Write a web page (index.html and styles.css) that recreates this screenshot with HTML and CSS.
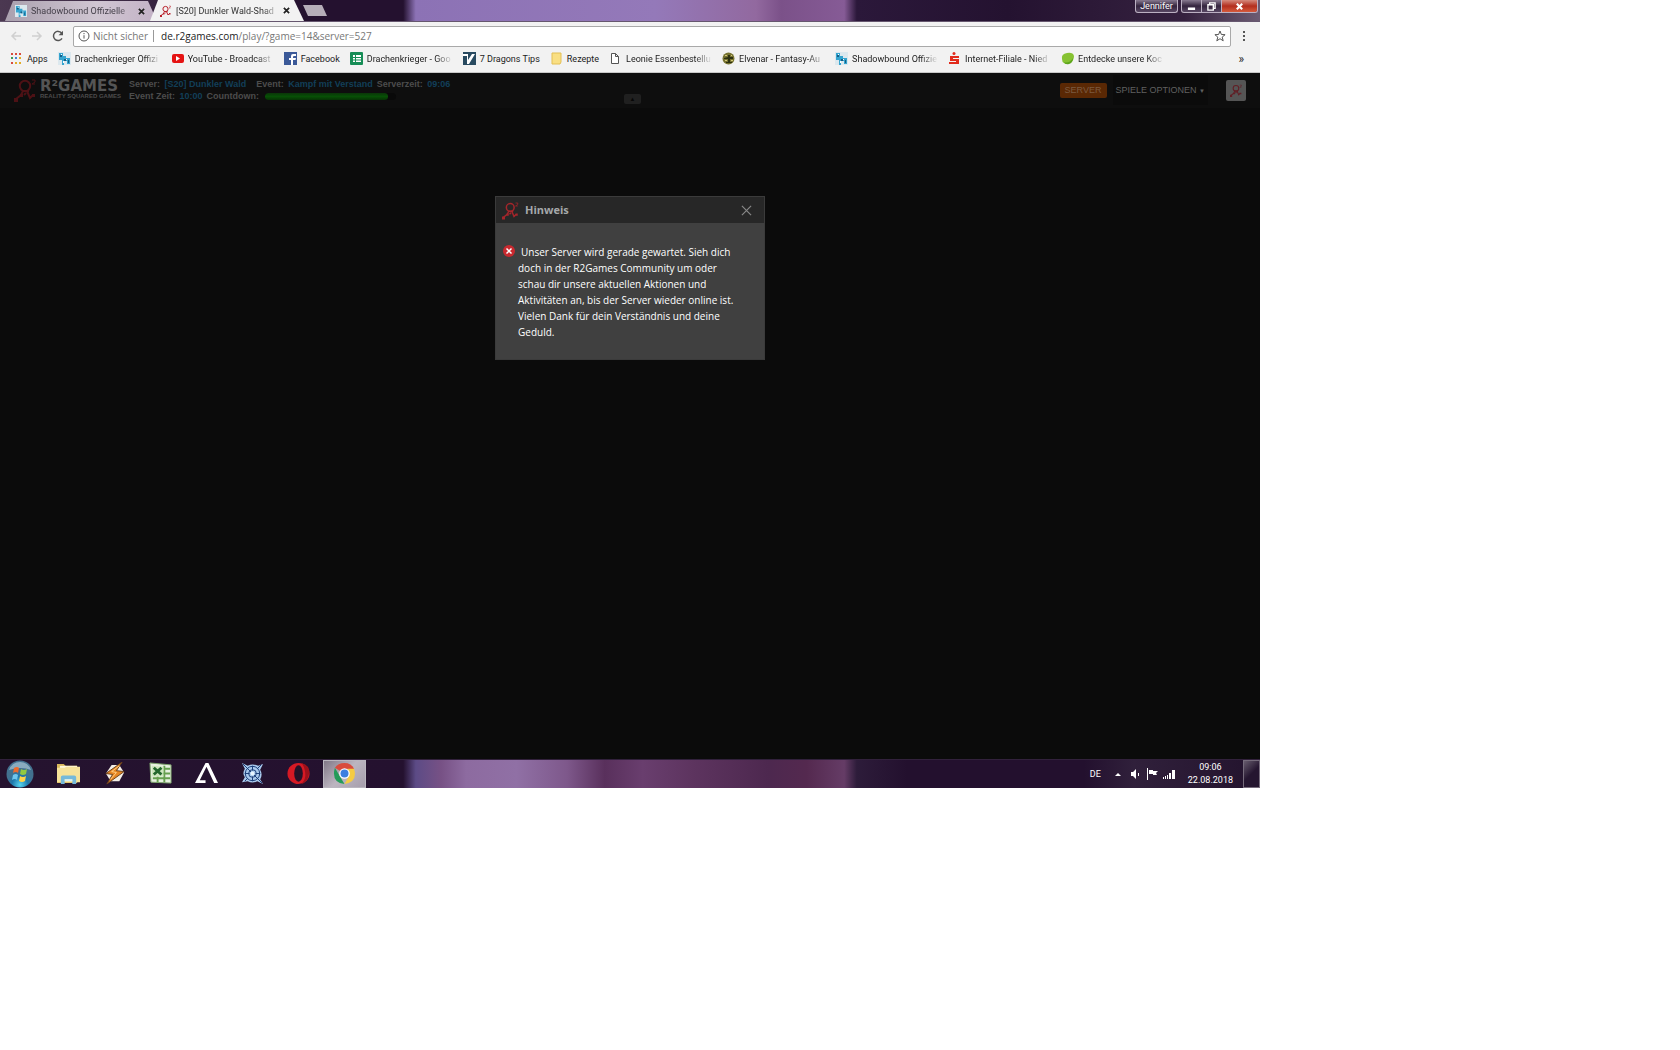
FILE: index.html
```html
<!DOCTYPE html>
<html lang="de">
<head>
  <meta charset="UTF-8" />
  <meta name="viewport" content="width=device-width, initial-scale=1" />
  <title>[S20] Dunkler Wald-Shadowbound</title>
  <link rel="stylesheet" href="styles.css">
</head>
<body>
  <!-- shared icons -->
  <svg class="sprite" aria-hidden="true">
    <symbol id="r2" viewBox="0 0 24 24">
      <g fill="none" stroke="currentColor" stroke-width="2">
        <circle cx="11" cy="8" r="5.2" />
        <path d="M8 13h7M9 13l-2 4 -5 4M13 13l3 7 3-3M10 17l2-2" />
        <path d="M18 2h3v2l-3 2h3" stroke-width="1" />
      </g>
      <path d="M0 20h4v4H0zM18 16h3v3h-3zM6 16h3v3H6z" fill="currentColor" />
    </symbol>
    <symbol id="dragon" viewBox="0 0 13 13">
      <path d="M0 0h13v13H0z" fill="#dce8ee" />
      <path d="M1 1h4v3h3v2h4v6H9V9H6v4H4V8H1z" fill="#35a4cf" />
      <path d="M2 3h2v2H2zM6 7h2v2H6zM10 8h1v3h-1z" fill="#165f86" />
      <path d="M3 2h1v1H3zM8 7h1v1H8zM5 9h1v2H5z" fill="#fff" />
    </symbol>
  </svg>

  <div class="desktop">
    <header class="titlebar">
      <div class="tabs">
        <div class="tab">
          <svg class="fav"><use href="#dragon" /></svg>
          <span class="tab-title">Shadowbound Offizielle</span>
          <button class="tab-close" aria-label="Tab schließen"><svg viewBox="0 0 8 8"><path d="M1 1l6 6M7 1L1 7" /></svg></button>
        </div>
        <div class="tab active">
          <svg class="fav red"><use href="#r2" /></svg>
          <span class="tab-title">[S20] Dunkler Wald-Shad</span>
          <button class="tab-close" aria-label="Tab schließen"><svg viewBox="0 0 8 8"><path d="M1 1l6 6M7 1L1 7" /></svg></button>
        </div>
        <button class="new-tab" aria-label="Neuer Tab"></button>
      </div>
      <div class="window-controls">
        <button class="user">Jennifer</button>
        <div class="control-group">
          <button aria-label="Minimieren"><svg viewBox="0 0 10 10"><path d="M1 6h8v3H1z" fill="#fff" /></svg></button>
          <button aria-label="Verkleinern"><svg viewBox="0 0 10 10"><path d="M3 3V1h6v6H7M1 3h6v6H1z" fill="none" stroke="#fff" stroke-width="1.5" /></svg></button>
          <button class="close" aria-label="Schließen"><svg viewBox="0 0 10 10"><path d="M2 2l6 6M8 2L2 8" stroke="#fff" stroke-width="2.4" /></svg></button>
        </div>
      </div>
    </header>

    <div class="toolbar">
      <button class="nav off" aria-label="Zurück"><svg viewBox="0 0 12 12"><path d="M11 6H2M6 2L2 6l4 4" /></svg></button>
      <button class="nav off" aria-label="Vorwärts"><svg viewBox="0 0 12 12"><path d="M1 6h9M6 2l4 4-4 4" /></svg></button>
      <button class="nav" aria-label="Neu laden"><svg viewBox="0 0 12 12"><path d="M10 8.4A4.6 4.6 0 1 1 9.6 3" /><path d="M11 .8v4.4H6.600z" class="solid" /></svg></button>
      <div class="omnibox">
        <svg class="info" viewBox="0 0 12 12"><circle cx="6" cy="6" r="5" /><path d="M6 5.200v3.400M6 3v1.200" /></svg>
        <span class="insecure">Nicht sicher</span>
        <span class="url"><b>de.r2games.com</b>/play/?game=14&amp;server=527</span>
        <button class="star" aria-label="Lesezeichen"><svg viewBox="0 0 12 12"><path d="M6 1l1.400 3.500 3.700.2-2.900 2.400 1 3.700L6 8.700l-3.200 2.100 1-3.700L.9 4.700l3.700-.2z" /></svg></button>
      </div>
      <button class="dots" aria-label="Menü"><svg viewBox="0 0 4 12"><path d="M1 1h2v2H1zM1 5h2v2H1zM1 9h2v2H1z" /></svg></button>
    </div>

    <nav class="bookmarks">
      <a href="#"><svg viewBox="0 0 13 13"><path d="M1 1h2v2H1zM1 10h2v2H1z" fill="#d94b3d" /><path d="M5 1h2v2H5zM9 1h2v2H9z" fill="#d94b3d" /><path d="M1 5h2v2H1z" fill="#3f9c55" /><path d="M5 5h2v2H5z" fill="#4680d8" /><path d="M9 5h2v2H9zM5 10h2v2H5zM9 10h2v2H9z" fill="#e2ac26" /></svg><span>Apps</span></a>
      <a href="#"><svg><use href="#dragon" /></svg><span class="long">Drachenkrieger Offizi</span></a>
      <a href="#"><svg viewBox="0 0 13 13"><rect x="1" y="2" width="12" height="9" rx="2" fill="#e51313" /><path d="M5 4l4 2.500L5 9z" fill="#fff" /></svg><span class="long">YouTube - Broadcast</span></a>
      <a href="#"><svg viewBox="0 0 13 13"><path d="M0 0h13v13H0z" fill="#3b5998" /><path d="M7 13V8H5V6h2V4q0-2 2-2h3v2h-2q-1 0-1 1v1h3l-.5 2H9v5z" fill="#fff" /></svg><span>Facebook</span></a>
      <a href="#"><svg viewBox="0 0 13 13"><rect width="13" height="13" rx="1" fill="#168d56" /><path d="M3 3h8v7H3z" fill="#fff" /><path d="M3 5.500h8M3 8h8M5.500 3v7" stroke="#168d56" /></svg><span class="long">Drachenkrieger - Goo</span></a>
      <a href="#"><svg viewBox="0 0 13 13"><path d="M0 0h13v13H0z" fill="#284a60" /><path d="M0 2h5v6l4-6h3L6 12H4V4H0z" fill="#fff" /></svg><span>7 Dragons Tips</span></a>
      <a href="#"><svg viewBox="0 0 13 13"><path d="M2 1h9v9l-1 2H2z" fill="#f9df83" stroke="#e3bf55" /></svg><span>Rezepte</span></a>
      <a href="#"><svg viewBox="0 0 13 13"><path d="M2.500 1.500h4l3 3v7h-7zM6.500 1.500v3h3" fill="#fff" stroke="#555" /></svg><span class="long">Leonie Essenbestellu</span></a>
      <a href="#"><svg viewBox="0 0 13 13"><circle cx="6.500" cy="6.500" r="6" fill="#777331" /><path d="M6 3h2v2h3v2H8v3h2v1H4v-1h2V7H2V6l4-1z" fill="#2c3010" /><path d="M3 3h2v1H3zM9 3h1v1H9zM3 8h2v1H3zM9 8h2v1H9z" fill="#d5ca77" /></svg><span class="long">Elvenar - Fantasy-Au</span></a>
      <a href="#"><svg><use href="#dragon" /></svg><span class="long">Shadowbound Offizie</span></a>
      <a href="#"><svg viewBox="0 0 13 13"><circle cx="6" cy="1.500" r="1.500" fill="#e22b1c" /><path d="M2 4h9v2H5v1h6v5H1v-2h7V9H2z" fill="#e22b1c" /></svg><span class="long">Internet-Filiale - Nied</span></a>
      <a href="#"><svg viewBox="0 0 13 13"><path d="M1 7q-1-5 5-6t7 3q0 5-4 7t-6 0q-2-1-2-4z" fill="#86c232" /><path d="M3 10q5 2 9-4 0 5-4 6t-5-2z" fill="#5da51c" /></svg><span class="long">Entdecke unsere Koc</span></a>
      <button class="more" aria-label="Weitere Lesezeichen">»</button>
    </nav>

    <main class="page">
      <div class="game-bar">
        <a href="#" class="brand">
          <svg><use href="#r2" /></svg>
          <span class="brand-text">
            <span class="brand-name">R²GAMES</span>
            <span class="brand-sub">REALITY SQUARED GAMES</span>
          </span>
        </a>
        <div class="status">
          <div class="status-row">
            <span>Server: <b>[S20] Dunkler Wald</b></span>
            <span class="event">Event: <b>Kampf mit Verstand</b></span>
            <span>Serverzeit: <b>09:06</b></span>
          </div>
          <div class="status-row">
            <span>Event Zeit: <b>10:00</b></span>
            <span>Countdown:</span>
            <div class="countdown"><div class="countdown-fill"></div></div>
          </div>
        </div>
        <div class="options">
          <button class="server">SERVER</button>
          <button class="game-options">SPIELE OPTIONEN <small>▼</small></button>
          <button class="r2-button" aria-label="R2Games"><svg><use href="#r2" /></svg></button>
        </div>
        <button class="collapse" aria-label="Leiste einklappen">▲</button>
      </div>

      <section class="dialog" role="dialog" aria-labelledby="dialog-title">
        <div class="dialog-head">
          <svg class="dialog-logo"><use href="#r2" /></svg>
          <h1 id="dialog-title">Hinweis</h1>
          <button class="dialog-close" aria-label="Schließen"><svg viewBox="0 0 12 12"><path d="M1 1l10 10M11 1L1 11" /></svg></button>
        </div>
        <div class="dialog-body">
          <svg viewBox="0 0 12 12"><circle cx="6" cy="6" r="6" fill="#c9292f" /><path d="M3.500 3.500l5 5M8.500 3.500l-5 5" stroke="#fff" stroke-width="1.500" /></svg>
          <p>Unser Server wird gerade gewartet. Sieh dich<br>doch in der R2Games Community um oder<br>schau dir unsere aktuellen Aktionen und<br>Aktivitäten an, bis der Server wieder online ist.<br>Vielen Dank für dein Verständnis und deine<br>Geduld.</p>
        </div>
      </section>
    </main>

    <footer class="taskbar">
      <button class="start" aria-label="Start">
        <svg viewBox="0 0 28 28">
          <defs><radialGradient id="orb" cy=".9"><stop offset="0" stop-color="#56d5ef" /><stop offset=".6" stop-color="#1d78ac" /><stop offset="1" stop-color="#42718f" /></radialGradient></defs>
          <circle cx="14" cy="14" r="13.500" fill="url(#orb)" />
          <path d="M3 10q3-8 11-8t11 8q-10-4-22 0z" fill="#b9d4df" opacity=".6" />
          <path d="M8 8q3-2 5 0l-1 5q-2-2-5 0z" fill="#ee6b2d" />
          <path d="M15 9q3 2 6 0l-1 5q-3 2-6 0z" fill="#92c940" />
          <path d="M7 15q3-2 5 0l-1 5q-2-2-5 0z" fill="#6fc6ed" />
          <path d="M14 16q3 2 6 0l-1 5q-3 2-6 0z" fill="#ffd34a" />
        </svg>
      </button>
      <div class="tasks">
        <button aria-label="Explorer"><svg viewBox="0 0 24 24"><path d="M0 2h7l2 2h12v18H0z" fill="#d9b85b" /><path d="M3 4h18v4H3z" fill="#fff8db" /><path d="M0 6h8l2-1h14v16H0z" fill="#f6e299" /><path d="M4 23v-7q0-2 2-2h12q2 0 2 2v7h-4v-5H8v5z" fill="#75b9da" /><path d="M8 18h8v2H8z" fill="#d8f1f8" /></svg></button>
        <button aria-label="Winamp"><svg viewBox="0 0 24 24"><path d="M9 3h8l5 8-5 9H8l-5-8z" fill="#f4eee6" /><path d="M20 0L3 12l7 1-6 10 18-13-8-1z" fill="#e68522" stroke="#68401c" /><path d="M17 4l-8 6 5 1-6 7" fill="none" stroke="#ffd088" /></svg></button>
        <button aria-label="Excel"><svg viewBox="0 0 24 24"><path d="M1 1l22 2v19l-21-1z" fill="#e6f1df" stroke="#7da56d" /><path d="M15 7h7M14 12h8M4 17h18M16 4v17M9 15v6" stroke="#66a04f" stroke-width="2" /><path d="M3 4l12 1v10H3z" fill="#cde6bd" /><path d="M5 6l8 7M13 6l-8 7" stroke="#23672d" stroke-width="3" /></svg></button>
        <button aria-label="Aion"><svg viewBox="0 0 24 24"><path d="M0 22L11 1h3l10 21h-4L12 5 5 19h6v3z" fill="#fff" /></svg></button>
        <button aria-label="Spiel"><svg viewBox="0 0 24 24"><path d="M1 1l6 3q5-3 11 0l5-2-3 6q3 5 0 10l3 5-6-3q-5 3-10 0l-6 1 3-5q-3-4 0-9z" fill="#a9c9ec" /><g fill="none" stroke="#193c77"><circle cx="12" cy="12" r="7.500" /><circle cx="12" cy="12" r="4" /><path d="M2 2l20 20M4 20l3-3M17 7l4-4M12 4v5M12 15v5M4 12h5M15 12h5" /></g><circle cx="12" cy="12" r="2" fill="#e8f5ff" /></svg></button>
        <button aria-label="Opera"><svg viewBox="0 0 24 24"><ellipse cx="12" cy="12" rx="11.500" ry="11" fill="#d61924" /><path d="M15 1q9 2 8 11t-8 11q5-5 4-12t-4-10z" fill="#9d111b" /><ellipse cx="12" cy="12" rx="4.500" ry="8.500" fill="#251228" /></svg></button>
        <button class="running" aria-label="Chrome"><svg viewBox="0 0 24 24"><path d="M12 12L2 6Q5 1 12 1t10 6z" fill="#d94c3d" /><path d="M2 6l7 12 3 5Q1 22 1 12q0-3 1-6z" fill="#239b58" /><path d="M12 23l5-9-2-7h7q4 14-10 16z" fill="#f5cb42" /><circle cx="12" cy="12" r="5.500" fill="#fff" /><circle cx="12" cy="12" r="4.200" fill="#3c7ee0" /></svg></button>
      </div>
      <div class="tray">
        <span class="lang">DE</span>
        <svg class="tray-arrow" viewBox="0 0 12 12"><path d="M3 8l3-3 3 3z" /></svg>
        <svg viewBox="0 0 12 12"><path d="M2 4h2l3-3v10L4 8H2zM9 5h1v3H9z" /></svg>
        <svg viewBox="0 0 12 12"><path d="M1 0h1v12H1zM3 2h4v1h5l-2 2 1 2H7V6H3z" /></svg>
        <svg viewBox="0 0 12 12"><path d="M0 9h1v2H0zM2 8h1v3H2zM4 7h1v4H4zM6 5h2v6H6zM9 2h3v9H9z" /></svg>
        <time class="clock" datetime="2018-08-22T09:06">09:06<br>22.08.2018</time>
        <button class="show-desktop" aria-label="Desktop anzeigen"></button>
      </div>
    </footer>
  </div>
</body>
</html>
```

FILE: styles.css
```css
:root {
  --chrome: #f2f2f2;
  --dark: #0b0b0b;
  --night: #241230;
  --ui: "Open Sans", "Noto Sans", sans-serif;
  --small: Roboto, "Liberation Sans", sans-serif;
  --arial: "Liberation Sans", Arial, sans-serif;
}

* {
  box-sizing: border-box;
}

body {
  margin: 0;
  background: #fff;
  font-family: var(--ui);
  font-size: 9px;
}

button {
  padding: 0;
  border: 0;
  background: none;
  color: inherit;
  font: inherit;
  cursor: pointer;
}

a {
  color: inherit;
  text-decoration: none;
}

svg {
  display: block;
  flex: none;
}

.sprite {
  position: absolute;
  width: 0;
  height: 0;
}

.desktop {
  display: flex;
  flex-direction: column;
  width: 75vw;
  height: 75vh;
  overflow: hidden;
}

/* window frame */
.titlebar {
  display: flex;
  justify-content: space-between;
  height: 22px;
  padding: 0 2px 0 5px;
  border-bottom: 1px solid #66576f;
  background: linear-gradient(90deg, #4b3851 0, #24112f 24%, #24112f 32%, #8c72b5 33%, #9479b9 52%, #92699f 60%, #7b5189 62%, #865b96 67%, #2b183a 68%, var(--night) 80%, #35213f 94%, #6c5c73 100%);
}

.tabs {
  display: flex;
  align-items: flex-end;
  font-family: var(--small);
}

.tab {
  display: flex;
  align-items: center;
  gap: 4px;
  width: 152px;
  height: 20px;
  padding: 0 8px 0 10px;
  background: linear-gradient(90deg, #aaa0ae, #d0c6d2 60%, #c3b2c6);
  color: #45404a;
  clip-path: polygon(8px 0, 143px 0, 100% 100%, 0 100%);
}

.tab.active {
  width: 154px;
  height: 21px;
  margin-left: -7px;
  background: var(--chrome);
  color: #333;
  clip-path: polygon(8px 0, 144px 0, 100% 100%, 0 100%);
}

.tab.active .tab-close {
  margin-right: 6px;
}

.fav {
  width: 12px;
  height: 12px;
}

.red {
  color: #b8202a;
}

.tab-title {
  flex: 1;
  white-space: nowrap;
  mask-image: linear-gradient(90deg, #000 85%, transparent);
}

.tab-close {
  margin-right: 4px;
}

.tab-close svg {
  width: 7px;
  height: 7px;
  stroke: #222;
  stroke-width: 2;
}

.new-tab {
  align-self: center;
  width: 24px;
  height: 11px;
  margin-left: -1px;
  background: #b5adb8;
  clip-path: polygon(0 0, 19px 0, 100% 100%, 5px 100%);
}

.window-controls {
  display: flex;
  gap: 3px;
  height: 13px;
  color: #fff;
  font-size: 8px;
}

.user,
.control-group {
  border: 1px solid #bbb0c2;
  border-top: 0;
  border-radius: 0 0 3px 3px;
  background: linear-gradient(#887a90, #34243e 50%, #584763);
}

.user {
  width: 43px;
  font-family: var(--small);
  font-size: 9px;
}

.control-group {
  display: flex;
  overflow: hidden;
}

.control-group button {
  display: grid;
  place-items: center;
  width: 20px;
  border-right: 1px solid #bbb0c2;
}

.control-group .close {
  width: 35px;
  border: 0;
  background: linear-gradient(#d58a7d, #b32e1e 50%, #d55b3c);
}

.control-group svg {
  width: 9px;
  height: 9px;
}

/* address row */
.toolbar {
  display: flex;
  align-items: center;
  gap: 9px;
  height: 26px;
  padding: 2px 14px 0 10px;
  background: var(--chrome);
}

.nav svg {
  width: 12px;
  height: 12px;
  fill: none;
  stroke: #555;
  stroke-width: 1.5;
}

.nav.off svg {
  stroke: #d0d0d0;
}

.nav .solid {
  fill: #555;
  stroke: none;
}

.omnibox {
  display: flex;
  flex: 1;
  align-items: center;
  height: 21px;
  margin-right: 2px;
  padding: 0 4px;
  border: 1px solid #a9a9a9;
  border-radius: 2px;
  background: #fff;
  color: #777;
  font-size: 10px;
}

.info,
.star svg {
  width: 12px;
  height: 12px;
  fill: none;
  stroke: #555;
}

.insecure {
  margin-left: 3px;
  padding-right: 5px;
  border-right: 1px solid #999;
  line-height: 12px;
}

.url {
  flex: 1;
  margin-left: 7px;
}

.url b {
  color: #222;
  font-weight: 400;
}

.dots svg {
  width: 4px;
  height: 12px;
  fill: #555;
}

.bookmarks {
  display: flex;
  align-items: center;
  gap: 10px;
  height: 25px;
  padding: 0 16px 3px 10px;
  border-bottom: 1px solid #c8c8c8;
  background: var(--chrome);
  color: #222;
  font-family: var(--small);
  white-space: nowrap;
}

.bookmarks a {
  display: flex;
  align-items: center;
  gap: 4px;
}

.bookmarks svg {
  width: 13px;
  height: 13px;
}

.long {
  width: 86px;
  mask-image: linear-gradient(90deg, #000 80%, transparent);
}

.more {
  margin-left: auto;
  font-size: 12px;
}

/* game page */
.page {
  position: relative;
  flex: 1;
  background: var(--dark);
}

.game-bar {
  position: relative;
  display: flex;
  align-items: center;
  height: 35px;
  padding: 0 14px 1px;
  background: #0e0e0e;
  color: #4c4c4c;
  font-family: var(--arial);
}

.brand {
  display: flex;
  align-items: center;
  gap: 2px;
}

.brand svg {
  width: 24px;
  height: 26px;
  color: #4d1115;
}

.brand-text {
  display: flex;
  flex-direction: column;
  width: 80px;
  white-space: nowrap;
}

.brand-name {
  color: #555;
  font: bold 15px/11px "DejaVu Sans", sans-serif;
}

.brand-sub {
  font-size: 6px;
  font-weight: 700;
  line-height: 8px;
}

.status {
  margin-left: 9px;
  font-size: 9px;
  font-weight: 700;
  line-height: 12px;
}

.status-row {
  display: flex;
  align-items: center;
  gap: 4px;
}

.status b {
  margin-left: 2px;
  color: #123f58;
}

.event {
  margin-left: 6px;
}

.countdown {
  width: 131px;
  height: 7px;
  margin-left: 2px;
  border-radius: 4px;
  background: #090909;
}

.countdown-fill {
  width: 94%;
  height: 100%;
  border-radius: 4px;
  background: linear-gradient(#0a3608, #075006 50%, #063204);
}

.options {
  display: flex;
  align-items: center;
  margin-left: auto;
}

.server {
  width: 47px;
  height: 15px;
  border-radius: 2px;
  background: #5a2804;
  color: #7a5a40;
}

.game-options {
  height: 30px;
  margin: 0 18px 0 6px;
  padding: 0 3px;
  background: var(--dark);
  color: #606060;
}

.game-options small {
  font-size: 6px;
}

.r2-button {
  display: grid;
  place-items: center;
  width: 20px;
  height: 21px;
  border-radius: 2px;
  background: #555;
  color: #611e25;
}

.r2-button svg {
  width: 13px;
  height: 13px;
}

.collapse {
  position: absolute;
  bottom: 4px;
  left: 50%;
  width: 17px;
  height: 10px;
  margin-left: -6px;
  border-radius: 2px;
  background: #202020;
  color: #070707;
  font-size: 6px;
  line-height: 10px;
}

.dialog {
  position: absolute;
  top: 123px;
  left: 50%;
  width: 270px;
  border: 1px solid #3b3b3b;
  background: #404040;
  color: #fff;
  transform: translateX(-50%);
}

.dialog-head {
  display: flex;
  align-items: center;
  height: 26px;
  padding: 0 12px 0 6px;
  background: #272727;
}

.dialog-logo {
  width: 18px;
  height: 19px;
  color: #a4262b;
}

.dialog h1 {
  flex: 1;
  margin: 0 0 0 5px;
  color: #a5a8aa;
  font-size: 11px;
  line-height: 14px;
}

.dialog-close svg {
  width: 11px;
  height: 11px;
  stroke: #888;
  stroke-width: 1.3;
}

.dialog-body {
  display: flex;
  gap: 3px;
  padding: 21px 7px 19px;
}

.dialog-body svg {
  width: 12px;
  height: 12px;
  margin-top: 1px;
}

.dialog p {
  margin: 0;
  font-size: 10px;
  line-height: 16px;
  text-indent: 3px;
  white-space: nowrap;
}

/* taskbar */
.taskbar {
  display: flex;
  align-items: center;
  height: 29px;
  padding-left: 6px;
  border-top: 1px solid #32213c;
  background: linear-gradient(90deg, #25132f 0, #24112f 32%, #5c4b86 33%, #775185 35%, #8d6ba0 37%, #9070a5 41%, #7e588b 45%, #59305c 48%, #693e6e 51%, #5d345f 55%, #4d284f 61%, #54294f 64%, #653c66 67%, #2d1c3a 68%, #23102e 72%, #23102e 86%, #30203b 90%, #23132d 100%);
}

.start svg {
  width: 28px;
  height: 28px;
}

.tasks {
  display: flex;
  gap: 3px;
  margin-left: 13px;
}

.tasks button {
  display: grid;
  place-items: center;
  width: 43px;
  height: 28px;
}

.tasks svg {
  width: 23px;
  height: 23px;
}

.tasks .running {
  border: 1px solid #bab6bf;
  background: linear-gradient(135deg, #817887, #bcb5c0 50%, #a69eac);
}

.tray {
  display: flex;
  align-items: center;
  gap: 5px;
  height: 100%;
  margin-left: auto;
  color: #fff;
  font-family: var(--small);
}

.tray svg {
  width: 12px;
  height: 12px;
  fill: #fff;
}

.lang {
  margin-right: 6px;
}

.clock {
  margin: 0 5px 0 8px;
  line-height: 13px;
  text-align: center;
}

.show-desktop {
  width: 17px;
  height: 100%;
  border: 1px solid #756b7b;
  background: linear-gradient(135deg, #675c6d, #251630 50%);
}
```
